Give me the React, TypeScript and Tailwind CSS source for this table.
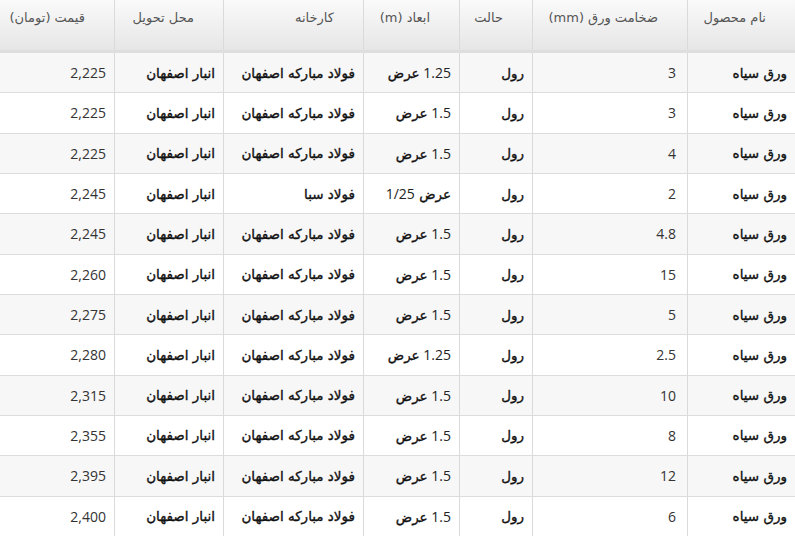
import React from "react";

const rows = [
  ["3", "1.25 عرض", "فولاد مبارکه اصفهان", "2,225"],
  ["3", "1.5 عرض", "فولاد مبارکه اصفهان", "2,225"],
  ["4", "1.5 عرض", "فولاد مبارکه اصفهان", "2,225"],
  ["2", "عرض 1/25", "فولاد سبا", "2,245"],
  ["4.8", "1.5 عرض", "فولاد مبارکه اصفهان", "2,245"],
  ["15", "1.5 عرض", "فولاد مبارکه اصفهان", "2,260"],
  ["5", "1.5 عرض", "فولاد مبارکه اصفهان", "2,275"],
  ["2.5", "1.25 عرض", "فولاد مبارکه اصفهان", "2,280"],
  ["10", "1.5 عرض", "فولاد مبارکه اصفهان", "2,315"],
  ["8", "1.5 عرض", "فولاد مبارکه اصفهان", "2,355"],
  ["12", "1.5 عرض", "فولاد مبارکه اصفهان", "2,395"],
  ["6", "1.5 عرض", "فولاد مبارکه اصفهان", "2,400"],
];

const widths = ["w-[108px]", "w-[155px]", "w-[73px]", "w-[96px]", "w-[140px]", "w-[109px]", "w-[114px]"];
const headers = ["نام محصول", "ضخامت ورق (mm)", "حالت", "ابعاد (m)", "کارخانه", "محل تحویل", "قیمت (تومان)"];

const fa = "font-['DejaVu_Sans',sans-serif]";
const num = "font-['Open_Sans','DejaVu_Sans',sans-serif]";
const faBody = `${fa} text-[13.5px] font-normal text-[#111] [-webkit-text-stroke:0.35px_#111]`;

export default function App() {
  return (
    <div dir="rtl" className="w-[795px] h-[536px] overflow-hidden bg-white text-[#222]">
      <div className="flex h-[53px] bg-gradient-to-b from-[#fafafa] to-[#e6e6e6] border-b-[3px] border-[#dedede]">
        {headers.map((h, i) => (
          <div
            key={i}
            className={`${widths[i]} shrink-0 h-full pr-[29px] pt-[8px] text-[13px] text-[#555] ${fa} ${i < 6 ? "border-l border-[#dadada]" : ""}`}
          >
            {h}
          </div>
        ))}
      </div>
      {rows.map((r, idx) => {
        const cells = [
          { t: "ورق سیاه", b: true },
          { t: r[0], b: false, pr: "pr-[11px]" },
          { t: "رول", b: true },
          { t: r[1], b: false, mixed: true },
          { t: r[2], b: true },
          { t: "انبار اصفهان", b: true },
          { t: r[3], b: false },
        ];
        return (
          <div
            key={idx}
            className={`flex h-[40.33px] border-b border-[#dcdcdc] ${idx % 2 === 0 ? "bg-[#f7f7f7]" : "bg-white"}`}
          >
            {cells.map((c, i) => (
              <div
                key={i}
                className={`${widths[i]} shrink-0 h-full flex items-center ${c.pr ?? "pr-[8px]"} ${i < 6 ? "border-l border-[#dadada]" : ""}`}
              >
                {c.mixed ? (
                  <span className={`${num} text-[14px] text-[#222]`}>
                    {c.t.split(" ").map((p, k) =>
                      p === "عرض" ? (
                        <span key={k} className={faBody}>{p}{k === 0 ? " " : ""}</span>
                      ) : (
                        <span key={k}>{p}{k === 0 ? " " : ""}</span>
                      )
                    )}
                  </span>
                ) : (
                  <span className={c.b ? faBody : `${num} text-[14px] text-[#333]`}>{c.t}</span>
                )}
              </div>
            ))}
          </div>
        );
      })}
    </div>
  );
}
